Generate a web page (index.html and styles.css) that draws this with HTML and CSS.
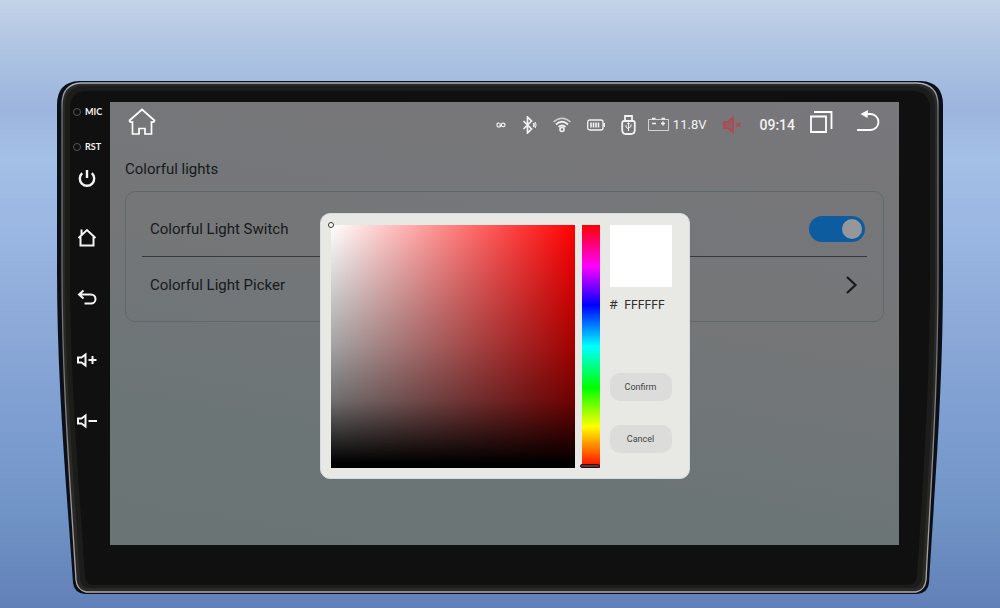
FILE: index.html
```html
<!DOCTYPE html>
<html lang="en">
<head>
<meta charset="utf-8">
<meta name="viewport" content="width=device-width, initial-scale=1">
<title>Colorful lights</title>
<link rel="stylesheet" href="styles.css">
</head>
<body>
<div class="device">
  <svg class="bezel" viewBox="0 0 886 513" preserveAspectRatio="none" aria-hidden="true">
    <defs>
      <linearGradient id="rim" x1="0" y1="0" x2="0" y2="1">
        <stop offset="0" stop-color="#aab4be"/><stop offset=".06" stop-color="#6d7073"/><stop offset=".5" stop-color="#74706d"/><stop offset="1" stop-color="#b3aaab"/>
      </linearGradient>
    </defs>
    <path fill="#0b1018" d="M22 0H864Q886 1 886 24V190C886 310 878 400 872 502Q871 512 860 513H28Q17 512 16 502C9 400 0 300 0 190V24Q0 1 22 0Z"/>
    <path fill="#292928" stroke="url(#rim)" stroke-width="1.3" d="M24 2H860Q881 3 881 24V190C881 310 874 400 869 499Q868 509 859 511H29Q20 509 19 499C13 400 5 300 5 190V24Q5 3 24 2Z"/>
    <path fill="#1c1c1b" d="M26 5H858Q878 6 878 26V190C878 310 871 400 865 498Q864 507 855 507H32Q24 507 23 498C17 400 8 300 8 190V26Q8 6 26 5Z"/>
    <path fill="#101010" d="M28 10H856Q873 11 873 28V190C873 310 866 400 860 496Q859 503 852 504H36Q29 503 28 496C22 400 13 300 13 190V28Q13 11 28 10Z"/>
  </svg>

  <nav class="rail" aria-label="Device buttons">
    <span class="port"><i class="hole"></i>MIC</span>
    <span class="port"><i class="hole"></i>RST</span>
    <div class="keys">
      <button class="key" aria-label="Power"><svg viewBox="0 0 22 22"><path stroke-width="2.4" d="M6.2 5.200A7.200 7.200 0 1 0 15.800 5.200M11 2V10"/></svg></button>
      <button class="key" aria-label="Home"><svg viewBox="0 0 22 22"><path d="M2.500 10 11 2l8.500 8M4.500 9v8.500h13V9M5.500 6.500V1.500"/></svg></button>
      <button class="key" aria-label="Back"><svg viewBox="0 0 22 22"><path d="M7.500 2.500 3 6.500l4.500 4M3.500 6.500H15a4.500 4.500 0 0 1 0 9H8.500"/></svg></button>
      <button class="key" aria-label="Volume up"><svg viewBox="0 0 22 22"><path d="M2 9.500h3.500L9.500 6.500v11l-4-3H2zM12.500 12h8M16.500 8v8"/></svg></button>
      <button class="key" aria-label="Volume down"><svg viewBox="0 0 22 22"><path d="M2 10.500h3.500l4-3v11l-4-3H2zM12.500 13h8.500"/></svg></button>
    </div>
  </nav>

  <main class="screen">
    <header class="topbar">
      <button class="icon home" aria-label="Home"><svg width="28" height="28" viewBox="0 0 28 28"><path stroke-width="1.700" d="M14 1.500 1.500 12.500q0 2 3 1.500V26H11v-5.500h6V26h6.500V14q3 .5 3-1.500z"/></svg></button>
      <div class="status">
        <svg width="10" height="8" viewBox="0 0 10 8"><path stroke-width="1.200" d="M4.500 2.500Q1 1 1 4t3.500 1.500V4H3M5.500 2.500V5Q9 6.500 9 4T5.500 2.500"/></svg>
        <svg width="15" height="18" viewBox="0 0 15 18"><path stroke-width="1.700" d="m1.500 5 8 8L5.500 17V1l4 4-8 8M11.500 7q1 2 0 4"/><path d="M13.300 6q1.500 3 0 6"/></svg>
        <svg width="18" height="18" viewBox="0 0 18 18"><path stroke-opacity=".7" stroke-width="1.500" d="M.5 6q8.500-7.500 17 0"/><path stroke-width="1.800" d="M3 8.500q6-5.500 12 0M5.500 11q3.500-3 7 0"/><circle cx="9" cy="13.500" r="2" stroke-width="1.600"/></svg>
        <svg width="18" height="12" viewBox="0 0 18 12"><rect x=".7" y="1" width="15.300" height="10" rx="2" stroke-width="1.300"/><path d="M4 3.500v5M6.500 3.500v5M9 3.500v5M11.500 3.500v5" stroke-width="1.600"/><path stroke-width="1.500" d="M17.200 4v4"/></svg>
        <svg width="15" height="20" viewBox="0 0 15 20"><path stroke-width="1.800" d="M4 5V1h7v4M3 6h9q1.800 0 1.800 2v7q0 4-4 4H5.200q-4 0-4-4V8Q1.200 6 3 6z"/><path d="M7.500 8v8M5 10v2l2.500 2M10 9.500v2L7.500 13M6.500 9l1-1.500 1 1.500"/></svg>
        <span class="volts"><svg width="21" height="15" viewBox="0 0 21 15"><path stroke-opacity=".75" d="M.5 2.500h20v11H.5z"/><path stroke-width="1.500" d="M4 1.500h3.500M13.500 1.500H17M4 6.500h4M13 6.500h4M15 4.500v4"/></svg>11.8V</span>
        <svg class="muted" width="21" height="18" viewBox="0 0 21 18"><path fill="#a9474f" fill-opacity=".5" stroke-width="2" d="M2 6h3.500L11 2v14l-5.500-4H2z"/><path stroke-width="1.600" d="m14 7 4.500 4M14 11l4.500-4"/></svg>
        <time class="clock">09:14</time>
      </div>
      <button class="icon recents" aria-label="Recent apps"><svg width="24" height="24" viewBox="0 0 24 24"><path stroke-width="1.800" d="M2 6.500h15v15.500H2zM5 2h17.500V19"/></svg></button>
      <button class="icon" aria-label="Back"><svg width="24" height="24" viewBox="0 0 24 24"><path stroke-width="1.800" d="M8 4h6.500a8 8 0 0 1 0 16H1"/><path fill="#fff" stroke="none" d="M4.500 4 12 0 11.500 8z"/></svg></button>
    </header>

    <h1 class="title">Colorful lights</h1>
    <section class="card">
      <label class="row" for="light-switch">Colorful Light Switch<input id="light-switch" class="switch" type="checkbox" role="switch" checked></label>
      <button class="row picker-row">Colorful Light Picker<svg width="16" height="22" viewBox="0 0 16 22"><path d="m3 3 8.500 8L3 19"/></svg></button>
    </section>

    <div class="dialog" role="dialog" aria-label="Colorful Light Picker">
      <div class="shade"><i class="cursor"></i></div>
      <input class="hue" type="range" min="0" max="360" value="0" aria-label="Hue">
      <div class="side">
        <div class="preview"></div>
        <div class="hex"><label for="hex">#</label><input id="hex" type="text" value="FFFFFF" maxlength="6"></div>
        <button class="action">Confirm</button>
        <button class="action">Cancel</button>
      </div>
    </div>
  </main>
</div>
</body>
</html>
```

FILE: styles.css
```css
* { box-sizing: border-box; }

body {
  margin: 0;
  min-height: 100vh;
  padding: 81px 57px 14px;
  display: flex;
  background: linear-gradient(#c3d3e8 0%, #adc3e2 9%, #9db5de 18%, #a5c0e6 26%, #9ab6e2 38%, #8eaad8 52%, #7f9fd2 68%, #7093c5 85%, #6180b8 100%);
  font-family: Roboto, "Liberation Sans", sans-serif;
}

button, input { font: inherit; color: inherit; }
button { border: 0; padding: 0; background: none; cursor: pointer; }
svg { display: block; fill: none; stroke: currentColor; flex: none; }

.device {
  position: relative;
  flex: 1;
  display: flex;
  padding: 21px 44px 49px 0;
}

.bezel { position: absolute; inset: 0; width: 100%; height: 100%; stroke: none; }

.rail {
  position: relative;
  width: 53px;
  padding: 3px 0 0 16px;
  color: #f4f4f4;
}

.port {
  display: flex;
  align-items: center;
  gap: 4px;
  height: 14px;
  margin-bottom: 21px;
  font: 700 9px/14px Lato, sans-serif;
}
.port + .port { margin-bottom: 14px; }

.hole {
  width: 8px;
  height: 8px;
  border: 1px solid #555;
  border-radius: 50%;
}

.keys { display: flex; flex-direction: column; gap: 38px; padding-left: 3px; }
.key { width: 22px; height: 22px; }
.key svg { width: 22px; height: 22px; stroke-width: 2; }

.screen {
  position: relative;
  flex: 1;
  padding: 0 15px;
  background: linear-gradient(190deg, #78777b 0%, #747678 45%, #6c7576 75%, #6b7475 100%);
  color: #17191c;
}

.topbar { display: flex; align-items: center; height: 40px; padding: 0 4px 0 3px; color: #fff; }
.home { margin-right: auto; }
.status { display: flex; align-items: center; gap: 16px; padding-top: 5px; color: #f2f2f2; }
.recents { margin: 0 23px 0 14px; }
.volts { display: flex; align-items: center; gap: 4px; margin-left: -4px; font-size: 13px; }
.muted { color: #b04951; }
.clock { font-size: 14px; font-weight: 500; }

.title { margin: 17px 0 12px; font-size: 15px; line-height: 20px; font-weight: 400; }

.card {
  padding: 9px 16px 9px;
  border: 1px solid #5e696f;
  border-radius: 10px;
}

.row {
  display: flex;
  align-items: center;
  justify-content: space-between;
  width: 100%;
  height: 55px;
  padding: 0 2px 0 8px;
  font-size: 15px;
}
.picker-row { border-top: 1px solid #36393c; height: 56px; padding-right: 7px; }
.picker-row svg { stroke-width: 2.2; }

.switch {
  appearance: none;
  margin: 0;
  width: 56px;
  height: 26px;
  padding: 3px;
  border-radius: 13px;
  background: #0d5c9f;
  display: flex;
  justify-content: flex-end;
}
.switch::before { content: ""; width: 20px; height: 20px; border-radius: 50%; background: #96979b; }
.switch:not(:checked) { justify-content: flex-start; background: #5d6266; }

.dialog {
  position: absolute;
  top: 111px;
  left: 50%;
  transform: translateX(-50%);
  display: flex;
  padding: 11px 17px 10px 10px;
  border: 1px solid #d5dbe4;
  border-radius: 10px;
  background: #e8e9e5;
  width: 370px;
}

.shade {
  position: relative;
  flex: 1;
  height: 243px;
  background:
    linear-gradient(transparent, #0000005c 50%, #0000008f 72%, #000000d4 88%, #000 98%),
    linear-gradient(90deg, #fff, #f00);
}
.cursor {
  position: absolute;
  top: -3px;
  left: -3px;
  width: 6px;
  height: 6px;
  border: 1px solid #333;
  border-radius: 50%;
  background: #fff;
}

.hue {
  appearance: none;
  writing-mode: vertical-lr;
  direction: rtl;
  width: 18px;
  height: 243px;
  margin: 0 10px 0 7px;
  background: linear-gradient(#f00, #f0f 17%, #00f 33%, #0ff 50%, #0f0 67%, #ff0 83%, #f00);
}
.hue::-webkit-slider-thumb {
  appearance: none;
  width: 20px;
  height: 4px;
  margin-left: -1px;
  border: 1px solid #111;
  border-radius: 2px;
  background: #713022;
}
.hue::-moz-range-thumb { width: 18px; height: 2px; border: 1px solid #111; border-radius: 2px; background: #713022; }

.side { width: 62px; display: flex; flex-direction: column; }
.preview { height: 62px; background: #fff; }
.hex {
  display: flex;
  gap: 6px;
  height: 20px;
  margin: 7px 0 59px;
  color: #303030;
  font: 13px/20px "Noto Sans", sans-serif;
}
.hex input { width: 100%; min-width: 0; padding: 0; border: 0; background: none; }
.action {
  height: 28px;
  border-radius: 10px;
  background: #dcdcdb;
  color: #444;
  font-size: 9px;
}
.action + .action { margin-top: 24px; }
```
